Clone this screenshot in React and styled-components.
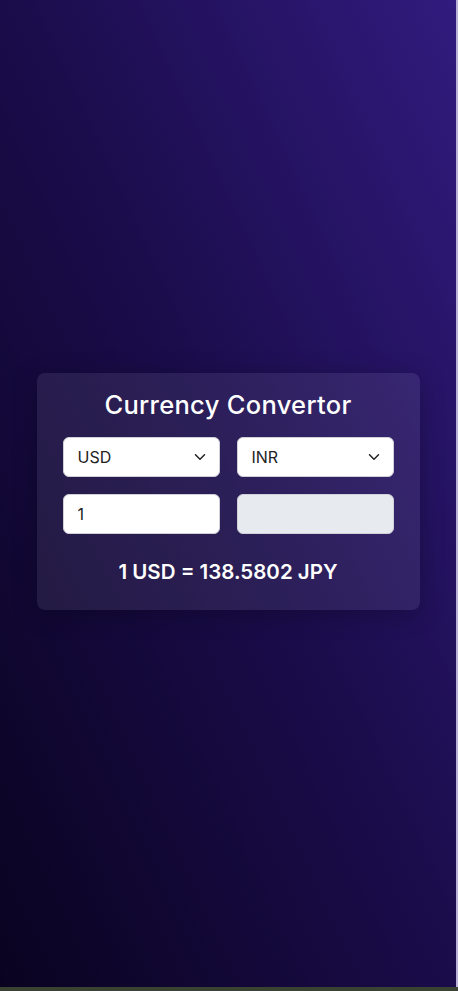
import { useState } from "react";
import styled, { createGlobalStyle } from "styled-components";

const GlobalStyle = createGlobalStyle`
	html, body {
		margin: 0;
		padding: 0;
		height: 100%;
	}
	#root {
		height: 100%;
	}
`;

const rates = { JPY: 138.5802 };

const App = () => {
	const [from, setFrom] = useState("USD");
	const [to, setTo] = useState("INR");
	const [amount, setAmount] = useState("1");

	return (
		<>
			<GlobalStyle />
			<Screen>
				<Main>
					<Page>
						<Card>
							<Title>Currency Convertor</Title>
							<Grid>
								<SelectWrap>
									<Select value={from} onChange={(e) => setFrom(e.target.value)}>
										<option>USD</option>
										<option>EUR</option>
										<option>INR</option>
										<option>JPY</option>
									</Select>
									<Chevron />
								</SelectWrap>
								<SelectWrap>
									<Select value={to} onChange={(e) => setTo(e.target.value)}>
										<option>INR</option>
										<option>USD</option>
										<option>EUR</option>
										<option>JPY</option>
									</Select>
									<Chevron />
								</SelectWrap>
								<Input value={amount} onChange={(e) => setAmount(e.target.value)} />
								<Input $disabled disabled value="" />
							</Grid>
							<Rate>1 USD = {rates.JPY} JPY</Rate>
						</Card>
					</Page>
					<ScrollEdge />
				</Main>
				<BottomStrip />
			</Screen>
		</>
	);
};

const Chevron = () => (
	<ChevronIcon viewBox="0 0 24 24" fill="none" stroke="#222" strokeWidth="2" strokeLinecap="round" strokeLinejoin="round">
		<path d="M6 9l6 6 6-6" />
	</ChevronIcon>
);

const Screen = styled.div`
	height: 100%;
	display: flex;
	flex-direction: column;
`;

const Main = styled.div`
	flex: 1;
	display: flex;
`;

const Page = styled.div`
	flex: 1;
	display: flex;
	align-items: center;
	justify-content: center;
	padding-bottom: 4px;
	background: linear-gradient(to top right, #0a0320 0%, #1a0c4a 50%, #311b7e 100%);
	font-family: Inter, "Liberation Sans", sans-serif;
`;

const ScrollEdge = styled.div`
	width: 2px;
	background: #b9b2d6;
`;

const BottomStrip = styled.div`
	height: 4px;
	background: #3a4231;
`;

const Card = styled.div`
	width: 383px;
	box-sizing: border-box;
	padding: 16px 26px 25px;
	border-radius: 8px;
	background: rgba(255, 255, 255, 0.08);
	box-shadow: 0 4px 24px rgba(0, 0, 0, 0.25);
	display: flex;
	flex-direction: column;
	align-items: center;
`;

const Title = styled.h1`
	margin: 0 0 16px;
	font-size: 25.5px;
	line-height: 32px;
	font-weight: 500;
	color: #ffffff;
	letter-spacing: 0.3px;
`;

const Grid = styled.div`
	width: 100%;
	display: grid;
	grid-template-columns: 1fr 1fr;
	column-gap: 17px;
	row-gap: 17px;
`;

const SelectWrap = styled.div`
	position: relative;
`;

const Select = styled.select`
	appearance: none;
	width: 100%;
	height: 40px;
	box-sizing: border-box;
	padding: 0 14px;
	border: 1px solid #d0d0d8;
	border-radius: 6px;
	background: #ffffff;
	font-family: inherit;
	font-size: 16px;
	color: #222;
	outline: none;
`;

const ChevronIcon = styled.svg`
	position: absolute;
	right: 11px;
	top: 11px;
	width: 18px;
	height: 18px;
	pointer-events: none;
`;

const Input = styled.input`
	width: 100%;
	height: 40px;
	box-sizing: border-box;
	padding: 0 14px;
	border: 1px solid #d0d0d8;
	border-radius: 6px;
	background: ${(p) => (p.$disabled ? "#e7eaee" : "#ffffff")};
	font-family: inherit;
	font-size: 16px;
	color: #222;
	outline: none;
`;

const Rate = styled.div`
	margin-top: 25px;
	font-size: 20.5px;
	line-height: 26px;
	font-weight: 600;
	color: #ffffff;
`;

export default App;
